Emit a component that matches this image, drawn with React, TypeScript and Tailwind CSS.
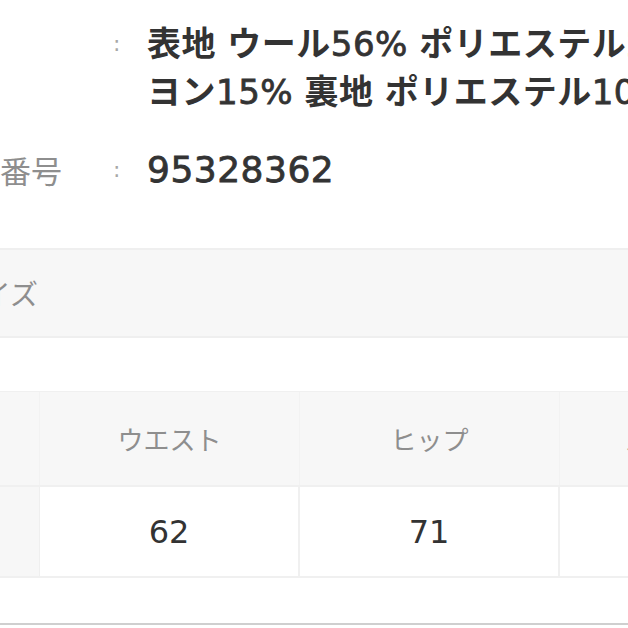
const jp = "font-['DejaVu_Sans','Noto_Sans_CJK_JP',sans-serif]";

function InfoRow({ label, size, children }: { label: string; size?: string; children: React.ReactNode }) {
  return (
    <div className="flex items-start">
      <div className="w-[162px] shrink-0 whitespace-nowrap text-right font-['Noto_Sans_CJK_JP',sans-serif] text-[31px] leading-[48px] text-[#8e8e8e]">
        {label}
      </div>
      <div className="w-[85px] shrink-0 pl-[51px] text-[22px] leading-[48px] text-[#a8a8a8]">:</div>
      <div className={`whitespace-nowrap leading-[48px] font-bold tracking-[0.5px] text-[#333333] ${size ?? "text-[34px]"}`}>{children}</div>
    </div>
  );
}

// latin parts: regular width, thickened a bit to sit with the bold kana
const L = ({ children }: { children: React.ReactNode }) => (
  <span className="font-normal [-webkit-text-stroke:0.8px_#333333]">{children}</span>
);

export default function App() {
  const cols = ["ウエスト", "ヒップ", "スカート丈"];
  const vals = ["62", "71", "73"];
  return (
    <div className={`h-[628px] w-[628px] overflow-hidden bg-white ${jp}`}>
      <div className="ml-[-100px] w-[1000px] pt-[20px]">
        <InfoRow label="">
          表地<L> </L>ウール<L>56% </L>ポリエステル<L>29% </L>レー
          <br />
          ヨン<L>15% </L>裏地<L> </L>ポリエステル<L>100%</L>
        </InfoRow>
        <div className="mt-[30px]">
          <InfoRow label="商品番号" size="text-[36px]">
            <L>95328362</L>
          </InfoRow>
        </div>

        <div className="mt-[54px] flex h-[90px] items-center border-y-2 border-[#efefef] bg-[#f7f7f7]">
          <div className="w-[138px] whitespace-nowrap text-right font-['Noto_Sans_CJK_JP',sans-serif] text-[28px] text-[#8e8e8e]">サイズ</div>
        </div>

        <div className="mt-[53px] flex h-[94px] border-t border-[#f0f0f0] bg-[#f7f7f7] font-['Noto_Sans_CJK_JP',sans-serif]">
          <div className="w-[140px] shrink-0 border-r border-[#f2f2f2]" />
          {cols.map((c) => (
            <div key={c} className="flex w-[260px] shrink-0 items-center justify-center border-r border-[#f2f2f2] text-[26px] text-[#8e8e8e]">
              {c}
            </div>
          ))}
        </div>
        <div className="flex h-[93px] border-y-2 border-[#f0f0f0]">
          <div className="w-[140px] shrink-0 border-r border-[#efefef] bg-[#f7f7f7]" />
          {vals.map((v) => (
            <div key={v} className="flex w-[260px] shrink-0 items-center justify-center border-r-2 border-[#f0f0f0] text-[32px] text-[#333333]">
              {v}
            </div>
          ))}
        </div>
        <div className="mt-[45px] h-[2px] bg-[#cfcfcf]" />
      </div>
    </div>
  );
}
